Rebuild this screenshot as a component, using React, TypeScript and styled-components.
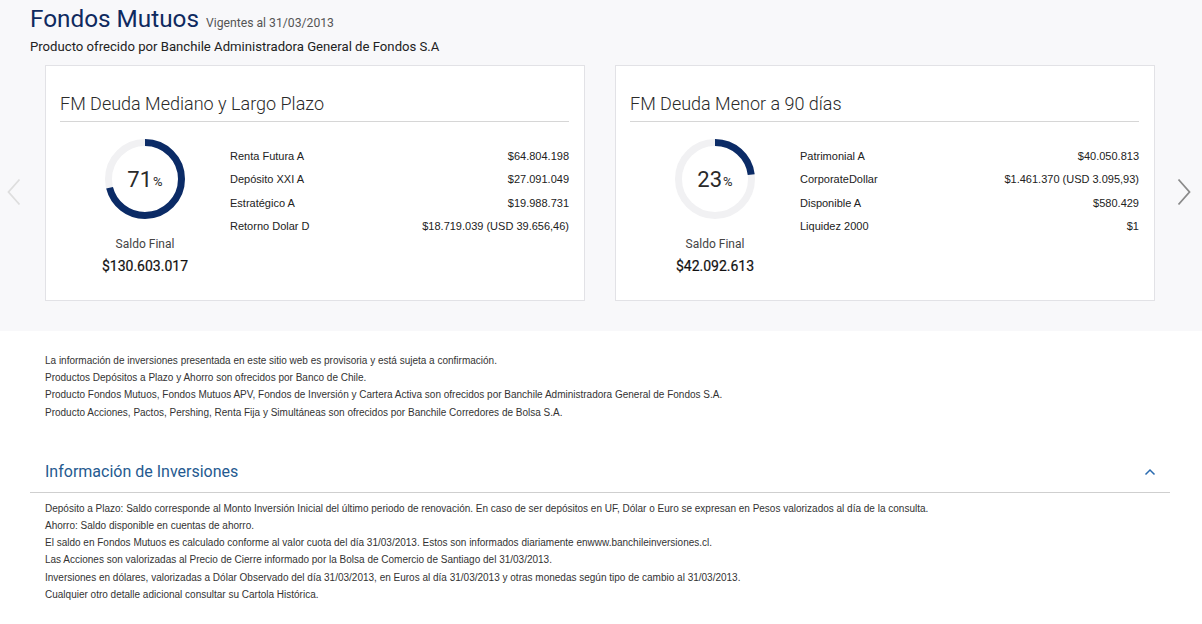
import React from "react";
import styled, { createGlobalStyle } from "styled-components";

const Global = createGlobalStyle`
  html, body { margin: 0; padding: 0; background: #ffffff; }
  body { font-family: Roboto, "Liberation Sans", Arial, sans-serif; color: #222; }
  * { box-sizing: border-box; }
`;

const Top = styled.section`
  background: #f8f8fa;
  padding: 4px 0 30px 0;
`;

const Header = styled.header`
  padding-left: 30px;
`;

const TitleLine = styled.div`
  display: flex;
  align-items: baseline;
  gap: 7px;
  height: 30px;
`;

const Title = styled.h1`
  margin: 0;
  font-family: Roboto, sans-serif;
  font-size: 24.3px;
  line-height: 30px;
  font-weight: 400;
  color: #0f2a5f;
`;

const Vigentes = styled.span`
  font-family: Roboto, sans-serif;
  font-size: 12.2px;
  color: #555;
`;

const Subtitle = styled.p`
  margin: 4px 0 0 0;
  font-family: Roboto, sans-serif;
  font-size: 13.15px;
  line-height: 18px;
  color: #222;
`;

const Carousel = styled.div`
  display: flex;
  align-items: stretch;
  margin-top: 9px;
`;

const ArrowSlot = styled.div<{ $w: number; $pad: number }>`
  width: ${(p) => p.$w}px;
  flex: none;
  display: flex;
  align-items: center;
  justify-content: flex-start;
  padding-left: ${(p) => p.$pad}px;
  padding-top: 18px;
`;

const Cards = styled.div`
  display: flex;
  gap: 30px;
`;

const Card = styled.article`
  width: 540px;
  height: 236px;
  background: #fff;
  border: 1px solid #e2e2e6;
  padding: 26px 15px 0 14px;
`;

const CardTitle = styled.h2`
  margin: 0;
  padding-bottom: 5px;
  border-bottom: 1px solid #d6d6d6;
  font-family: Roboto, sans-serif;
  font-weight: 300;
  font-size: 18px;
  line-height: 24px;
  color: #2a2a2a;
`;

const CardBody = styled.div`
  display: flex;
  padding-top: 17px;
`;

const Summary = styled.div`
  width: 170px;
  flex: none;
  display: flex;
  flex-direction: column;
  align-items: center;
`;

const Donut = styled.div`
  position: relative;
  width: 80px;
  height: 80px;
`;

const DonutLabel = styled.div`
  position: absolute;
  inset: 0;
  display: flex;
  align-items: center;
  justify-content: center;
  font-family: Roboto, sans-serif;
  color: #2a2a2a;
`;

const Pct = styled.span`
  font-size: 22px;
`;

const PctSign = styled.span`
  font-size: 13px;
  margin-left: 1px;
  margin-top: 5px;
`;

const SaldoLabel = styled.div`
  margin-top: 17px;
  font-family: Roboto, sans-serif;
  font-size: 12px;
  line-height: 16px;
  color: #444;
`;

const SaldoValue = styled.div`
  margin-top: 4px;
  font-family: Roboto, sans-serif;
  font-size: 14px;
  line-height: 20px;
  font-weight: 400;
  color: #111;
  -webkit-text-stroke: 0.2px #111;
`;

const Rows = styled.div`
  flex: 1;
  padding-top: 6px;
`;

const Row = styled.div`
  display: flex;
  justify-content: space-between;
  font-family: "Liberation Sans", Arial, sans-serif;
  font-size: 11px;
  line-height: 23.3px;
  color: #222;
`;

const Bottom = styled.section`
  padding: 21px 32px 0 30px;
`;

const Notes = styled.div`
  padding-left: 15px;
`;

const Note = styled.p`
  margin: 0;
  font-family: "Liberation Sans", Arial, sans-serif;
  font-size: 10px;
  line-height: 17.2px;
  color: #333;
`;

const AccHeader = styled.div`
  margin-top: 40px;
  display: flex;
  align-items: center;
  justify-content: space-between;
  padding: 1px 14px 10px 15px;
  border-bottom: 1px solid #cfcfcf;
`;

const AccTitle = styled.h3`
  margin: 0;
  font-family: Roboto, sans-serif;
  font-weight: 400;
  font-size: 16px;
  line-height: 20px;
  color: #255a90;
`;

const AccBody = styled.div`
  padding: 7px 0 0 15px;
`;

const Chevron = ({ dir, color }: { dir: "left" | "right"; color: string }) => (
  <svg width="14" height="28" viewBox="0 0 14 28">
    <path
      d={dir === "left" ? "M12.5 1.5 L1.5 14 L12.5 26.5" : "M1.5 1.5 L12.5 14 L1.5 26.5"}
      fill="none"
      stroke={color}
      strokeWidth="1.8"
    />
  </svg>
);

const Caret = () => (
  <svg width="12" height="8" viewBox="0 0 12 8">
    <path d="M1.5 6.5 L6 2 L10.5 6.5" fill="none" stroke="#2a6bb0" strokeWidth="1.5" />
  </svg>
);

const Ring = ({ pct }: { pct: number }) => {
  const r = 36.5;
  const c = 2 * Math.PI * r;
  return (
    <svg width="80" height="80" viewBox="0 0 80 80">
      <circle cx="40" cy="40" r={r} fill="none" stroke="#f1f1f3" strokeWidth="7" />
      <circle
        cx="40"
        cy="40"
        r={r}
        fill="none"
        stroke="#0b2b66"
        strokeWidth="7"
        strokeDasharray={`${(c * pct) / 100} ${c}`}
        transform="rotate(-90 40 40)"
      />
    </svg>
  );
};

type Fund = { title: string; pct: number; saldo: string; rows: [string, string][] };

const funds: Fund[] = [
  {
    title: "FM Deuda Mediano y Largo Plazo",
    pct: 71,
    saldo: "$130.603.017",
    rows: [
      ["Renta Futura A", "$64.804.198"],
      ["Depósito XXI A", "$27.091.049"],
      ["Estratégico A", "$19.988.731"],
      ["Retorno Dolar D", "$18.719.039 (USD 39.656,46)"],
    ],
  },
  {
    title: "FM Deuda Menor a 90 días",
    pct: 23,
    saldo: "$42.092.613",
    rows: [
      ["Patrimonial A", "$40.050.813"],
      ["CorporateDollar", "$1.461.370 (USD 3.095,93)"],
      ["Disponible A", "$580.429"],
      ["Liquidez 2000", "$1"],
    ],
  },
];

const notes = [
  "La información de inversiones presentada en este sitio web es provisoria y está sujeta a confirmación.",
  "Productos Depósitos a Plazo y Ahorro son ofrecidos por Banco de Chile.",
  "Producto Fondos Mutuos, Fondos Mutuos APV, Fondos de Inversión y Cartera Activa son ofrecidos por Banchile Administradora General de Fondos S.A.",
  "Producto Acciones, Pactos, Pershing, Renta Fija y Simultáneas son ofrecidos por Banchile Corredores de Bolsa S.A.",
];

const info = [
  "Depósito a Plazo: Saldo corresponde al Monto Inversión Inicial del último periodo de renovación. En caso de ser depósitos en UF, Dólar o Euro se expresan en Pesos valorizados al día de la consulta.",
  "Ahorro: Saldo disponible en cuentas de ahorro.",
  "El saldo en Fondos Mutuos es calculado conforme al valor cuota del día 31/03/2013. Estos son informados diariamente enwww.banchileinversiones.cl.",
  "Las Acciones son valorizadas al Precio de Cierre informado por la Bolsa de Comercio de Santiago del 31/03/2013.",
  "Inversiones en dólares, valorizadas a Dólar Observado del día 31/03/2013, en Euros al día 31/03/2013 y otras monedas según tipo de cambio al 31/03/2013.",
  "Cualquier otro detalle adicional consultar su Cartola Histórica.",
];

export default function App() {
  return (
    <>
      <Global />
      <Top>
        <Header>
          <TitleLine>
            <Title>Fondos Mutuos</Title>
            <Vigentes>Vigentes al 31/03/2013</Vigentes>
          </TitleLine>
          <Subtitle>Producto ofrecido por Banchile Administradora General de Fondos S.A</Subtitle>
        </Header>
        <Carousel>
          <ArrowSlot $w={45} $pad={7}>
            <Chevron dir="left" color="#dedede" />
          </ArrowSlot>
          <Cards>
            {funds.map((f) => (
              <Card key={f.title}>
                <CardTitle>{f.title}</CardTitle>
                <CardBody>
                  <Summary>
                    <Donut>
                      <Ring pct={f.pct} />
                      <DonutLabel>
                        <Pct>{f.pct}</Pct>
                        <PctSign>%</PctSign>
                      </DonutLabel>
                    </Donut>
                    <SaldoLabel>Saldo Final</SaldoLabel>
                    <SaldoValue>{f.saldo}</SaldoValue>
                  </Summary>
                  <Rows>
                    {f.rows.map(([k, v]) => (
                      <Row key={k}>
                        <span>{k}</span>
                        <span>{v}</span>
                      </Row>
                    ))}
                  </Rows>
                </CardBody>
              </Card>
            ))}
          </Cards>
          <ArrowSlot $w={47} $pad={22}>
            <Chevron dir="right" color="#8a8a8a" />
          </ArrowSlot>
        </Carousel>
      </Top>
      <Bottom>
        <Notes>
          {notes.map((n) => (
            <Note key={n}>{n}</Note>
          ))}
        </Notes>
        <AccHeader>
          <AccTitle>Información de Inversiones</AccTitle>
          <Caret />
        </AccHeader>
        <AccBody>
          {info.map((n) => (
            <Note key={n}>{n}</Note>
          ))}
        </AccBody>
      </Bottom>
    </>
  );
}
